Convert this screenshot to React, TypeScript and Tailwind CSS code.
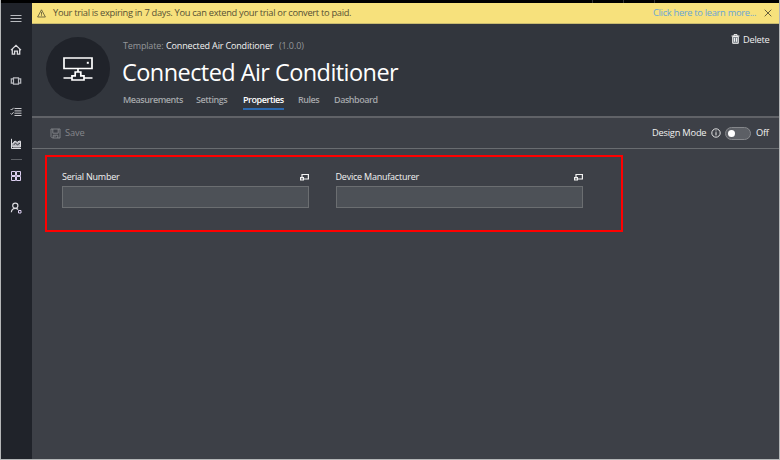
import React from "react";

const line = { fill: "none", stroke: "currentColor" } as const;

function NavIcon({ children, className = "" }: { children: React.ReactNode; className?: string }) {
  return (
    <svg width="12" height="12" viewBox="0 0 12 12" className={`block shrink-0 text-[#dcdce0] ${className}`} {...line}>
      {children}
    </svg>
  );
}

function Sidebar() {
  return (
    <nav className="flex w-[31px] shrink-0 flex-col items-center bg-[#20232a] pt-[10px] pr-px">
      <NavIcon>
        <path d="M.5 2.5h11M.5 5.5h11M.5 8.5h11" stroke="#b9bbc0" />
      </NavIcon>
      <NavIcon className="mt-[19px]">
        <path d="M1 6.1 6 1.4l5 4.7M2.3 5.3v4.9h2.3V7.1h2.8v3.1h2.3V5.3" strokeWidth="1.3" />
      </NavIcon>
      <NavIcon className="mt-[19px]">
        <path d="M3.5 2.9h5v6.2h-5zM3.2 3.8H1.3v4.4h1.9M8.8 3.8h1.9v4.4H8.8" stroke="#b9bbc0" strokeWidth="1.2" />
      </NavIcon>
      <NavIcon className="mt-[19px]">
        <path d="M4.5 2.5h7M4.5 4.9h7M4.5 7.2h7M4.5 9.5h7M.6 3l1 1 2-2.2M.6 7.4l1 1 2-2.2" strokeWidth=".9" />
      </NavIcon>
      <NavIcon className="mt-[20px]">
        <path d="M1.5.8v9.7h9.5" />
        <path d="M2.8 9V5L5 3l2.2 1.4L9 3.2h1.5V9z" fill="#b9b9c0" />
        <path d="m3.5 6.8 2-1.5 2 1.5 2.4-1.6" stroke="#30333a" />
      </NavIcon>
      <div className="mt-[9px] h-px w-[11px] bg-[#5d6065]" />
      <NavIcon className="mt-[10px]">
        <path d="M1.5 1.5h4v4h-4zM6.5 1.5h4v4h-4zM1.5 6.5h4v4h-4zM6.5 6.5h4v4h-4z" stroke="#dccff0" />
      </NavIcon>
      <NavIcon className="mt-[20px]">
        <circle cx="5.3" cy="3.7" r="2.6" strokeWidth="1.2" />
        <path d="M1.3 10.3c.3-2.5 1.5-4 4-4 1.3 0 2.1.4 2.8 1.2" strokeWidth="1.2" />
        <path d="M8.5 8.5H11V11H8.5z" stroke="#dccff0" />
      </NavIcon>
    </nav>
  );
}

function TrialBanner() {
  return (
    <div className="flex h-[21px] shrink-0 items-center border-b border-[#c9bb70] bg-[#f7e17c] text-[#565034]">
      <svg width="9" height="9" viewBox="0 0 9 9" className="ml-[5px]" {...line}>
        <path d="M4.5.8.6 8h7.8zM4.5 3v2.8M4.5 6.3v.8" strokeWidth=".8" />
      </svg>
      <span className="ml-[7px] w-[300px] text-[9.3px] tracking-[-0.3px]">
        Your trial is expiring in 7 days. You can extend your trial or convert to paid.
      </span>
      <span className="ml-auto w-[104px] text-[9.3px] tracking-[-0.3px] text-[#68a5d5]">Click here to learn more...</span>
      <svg width="8" height="8" viewBox="0 0 8 8" className="mr-[7px] ml-[7px]" {...line}>
        <path d="m.7.7 6.6 6.6m0-6.6L.7 7.3" strokeWidth=".9" />
      </svg>
    </div>
  );
}

function DeviceBadge() {
  return (
    <div className="mt-[13px] ml-[13.5px] flex size-16 shrink-0 items-center justify-center rounded-full bg-[#20232a]">
      <svg width="32" height="26" viewBox="0 0 32 26" className="ml-px text-white" {...line}>
        <path d="M2 2h28v10.5H2zM16 12.5V16M1.5 22H10M22 22h8.5M10 19.8h3.2V16h5.6v3.8H22V24H10z" strokeWidth="1.7" />
        <path d="M24.8 5.8h2v2h-2z" fill="currentColor" stroke="none" />
      </svg>
    </div>
  );
}

function Header() {
  return (
    <header className="flex h-[94px] shrink-0 border-b-2 border-[#606267] bg-[#32363d]">
      <DeviceBadge />
      <div className="ml-[12.5px] flex flex-1 flex-col">
        <div className="mt-[15px] flex h-[13px] items-center text-[9px] text-[#94969a]">
          <span className="ml-px w-[43px] tracking-[-0.15px]">Template:</span>
          <span className="w-[113px] tracking-[-0.15px] text-[#f2f2f2]">Connected Air Conditioner</span>
          <span className="tracking-[-0.1px]">(1.0.0)</span>
        </div>
        <h1 className="mt-[5px] h-[30px] text-[23.5px] leading-[30px] tracking-[-0.56px] text-white">
          Connected Air Conditioner
        </h1>
        <div className="mt-[6px] flex h-[17px] text-[9px] leading-[14px] font-semibold tracking-[-0.45px] text-[#a4a6aa]">
          <span className="ml-px w-[73px]">Measurements</span>
          <span className="w-[47px]">Settings</span>
          <span className="mr-[14px] w-[41px] border-b-2 border-[#2b69b0] text-white">Properties</span>
          <span className="w-[36px]">Rules</span>
          <span>Dashboard</span>
        </div>
      </div>
      <div className="mt-[8px] mr-[10px] flex h-[14px] items-center text-[9.3px] text-[#f0f0f0]">
        <svg width="9" height="10" viewBox="0 0 9 10" className="mr-[3px]" {...line}>
          <path d="M1.7 2.5h5.6v6.8H1.7z" fill="#788088" />
          <path d="M.5 2h8M3 1.9V.6h3v1.3M3.5 3.8v4M5.5 3.8v4" />
        </svg>
        <span className="w-[26px] pt-px tracking-[-0.25px]">Delete</span>
      </div>
    </header>
  );
}

function Toolbar() {
  return (
    <div className="flex h-[31px] shrink-0 items-center border-b border-[#696c70] bg-[#3d4047] text-[9.3px] text-[#f0f0f0]">
      <div className="ml-[18px] flex items-center text-[#85878b]">
        <svg width="11" height="11" viewBox="0 0 11 11" className="mr-[4px]" {...line}>
          <path d="M1 1h9v9H2.4L1 8.6zM2.8 1v4.2h5.4V1M3.2 10V7.2h4.6V10M5 7.5V9" strokeWidth=".9" />
        </svg>
        <span className="-mt-px tracking-[-0.15px]">Save</span>
      </div>
      <span className="ml-auto w-[59px] tracking-[-0.22px]">Design Mode</span>
      <svg width="10" height="10" viewBox="0 0 10 10" {...line}>
        <circle cx="5" cy="5" r="4.2" strokeWidth=".9" />
        <path d="M5 4.2v3.2M5 2.5v.9" />
      </svg>
      <div className="ml-[4px] flex h-[13px] w-[26px] items-center rounded-full border border-[#85878b] bg-[#5c5f65] pl-[2px]">
        <div className="size-[7px] rounded-full bg-white" />
      </div>
      <span className="ml-[5px] w-[13px] tracking-[-0.25px]">Off</span>
      <span className="w-[10px]" />
    </div>
  );
}

function Field({ label }: { label: string }) {
  return (
    <label className="block w-[247px]">
      <span className="flex h-[14px] items-center justify-between text-[9px] tracking-[-0.22px] text-[#f2f2f2]">
        {label}
        <svg width="9" height="8" viewBox="0 0 9 8" {...line}>
          <path d="M2 1.5h6.4v4.5H3.5M2 1v3M.6 4.7h2.8V7H.6z" strokeWidth="1.2" />
        </svg>
      </span>
      <input className="mt-[2px] block h-[22px] w-full border border-[#6b6e71] bg-[#4d5157] outline-none" />
    </label>
  );
}

export default function App() {
  return (
    <div className="flex h-[460px] w-[780px] flex-col overflow-hidden border-x border-b border-[#b5b7b8] bg-[#3d4047] font-['Open_Sans','Noto_Sans',sans-serif] whitespace-nowrap">
      <div className="flex h-[3px] shrink-0 bg-black pl-[591px]">
        <i className="mr-[30px] w-px bg-[#333]" />
        <i className="mr-[30px] w-px bg-[#333]" />
        <i className="w-px bg-[#333]" />
      </div>
      <div className="flex min-h-0 flex-1">
        <Sidebar />
        <div className="flex min-w-0 flex-1 flex-col">
          <TrialBanner />
          <Header />
          <Toolbar />
          <main className="flex-1 pt-[6px] pl-[13px]">
            <section className="flex h-[77px] w-[578px] gap-[26.5px] border-2 border-[#ff0000] pt-[13px] pl-[15px]">
              <Field label="Serial Number" />
              <Field label="Device Manufacturer" />
            </section>
          </main>
        </div>
      </div>
    </div>
  );
}
